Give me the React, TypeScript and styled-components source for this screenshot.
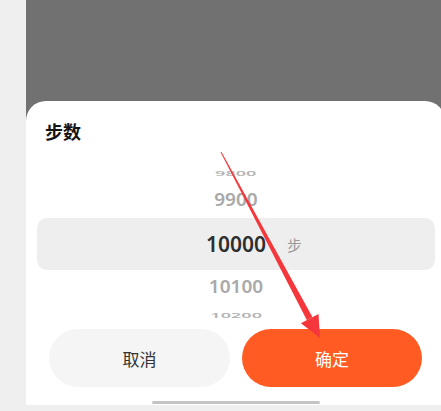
import styled, { createGlobalStyle } from "styled-components";

const GlobalStyle = createGlobalStyle`
  html, body {
    margin: 0;
    padding: 0;
    background: #efefef;
    overflow: hidden;
  }
  body {
    font-family: "Noto Sans", "Noto Sans CJK SC", sans-serif;
  }
`;

type Row = { value: number; sx: number; sy: number; h: number; color: string };

const above: Row[] = [
  { value: 9800, sx: 0.95, sy: 0.38, h: 20, color: "#b4b4b4" },
  { value: 9900, sx: 1, sy: 0.9, h: 35, color: "#a9a9a9" },
];

const below: Row[] = [
  { value: 10100, sx: 1, sy: 0.9, h: 35, color: "#a9a9a9" },
  { value: 10200, sx: 0.95, sy: 0.38, h: 20, color: "#b4b4b4" },
];

const App = () => {
  const renderRow = (r: Row) => (
    <WheelRow key={r.value} $h={r.h}>
      <WheelText $sx={r.sx} $sy={r.sy} $color={r.color}>
        {r.value}
      </WheelText>
    </WheelRow>
  );

  return (
    <>
      <GlobalStyle />
      <Page>
        <Screen>
          <Overlay />
          <Sheet>
            <Title>步数</Title>
            <Picker>
              {above.map(renderRow)}
              <Selected>
                <span />
                <SelectedValue>10000</SelectedValue>
                <Unit>步</Unit>
              </Selected>
              {below.map(renderRow)}
            </Picker>
            <Actions>
              <CancelButton>取消</CancelButton>
              <ConfirmButton>确定</ConfirmButton>
            </Actions>
            <HomeBar />
          </Sheet>
        </Screen>
        <Arrow width="441" height="411" viewBox="0 0 441 411">
          <polygon points="220.6,152.2 221.4,151.8 312.4,316.9 306.9,320.3" fill="#f5373b" />
          <polygon points="320,338 300.9,323.3 318.5,313.9" fill="#f5373b" />
        </Arrow>
      </Page>
    </>
  );
};

export default App;

const Page = styled.div`
  position: relative;
  width: 441px;
  height: 411px;
  padding-left: 26px;
  box-sizing: border-box;
  overflow: hidden;
`;

const Screen = styled.div`
  width: 419px;
  height: 405px;
  display: flex;
  flex-direction: column;
  background: #717171;
`;

const Overlay = styled.div`
  height: 101px;
  flex: none;
`;

const Sheet = styled.div`
  flex: 1;
  background: #ffffff;
  border-radius: 20px 20px 0 0;
  display: flex;
  flex-direction: column;
  padding-top: 18px;
`;

const Title = styled.div`
  height: 24px;
  line-height: 24px;
  padding-left: 19px;
  font-size: 18px;
  font-weight: 700;
  color: #141414;
  font-family: "Noto Sans CJK SC", sans-serif;
`;

const Picker = styled.div`
  margin-top: 20px;
  display: flex;
  flex-direction: column;
  padding: 0 10px 0 11px;
`;

const WheelRow = styled.div<{ $h: number }>`
  height: ${(p) => p.$h}px;
  display: flex;
  align-items: center;
  justify-content: center;
`;

const WheelText = styled.span<{ $sx: number; $sy: number; $color: string }>`
  display: inline-block;
  font-size: 19px;
  font-weight: 600;
  line-height: 1;
  color: ${(p) => p.$color};
  transform: scale(${(p) => p.$sx}, ${(p) => p.$sy});
`;

const Selected = styled.div`
  height: 52px;
  border-radius: 10px;
  background: #eeeeee;
  display: grid;
  grid-template-columns: 1fr auto 1fr;
  align-items: center;
`;

const SelectedValue = styled.span`
  font-size: 21px;
  font-weight: 600;
  color: #2e2e2e;
`;

const Unit = styled.span`
  padding-left: 21px;
  font-size: 15px;
  color: #9a9a9a;
  font-family: "Noto Sans CJK SC", sans-serif;
`;

const Actions = styled.div`
  margin-top: 4px;
  display: grid;
  grid-template-columns: 181px 180px;
  justify-content: center;
  gap: 12px;
`;

const ButtonBase = styled.button`
  height: 58px;
  border: none;
  border-radius: 29px;
  font-size: 17px;
  font-family: "Noto Sans CJK SC", sans-serif;
  padding: 0;
`;

const CancelButton = styled(ButtonBase)`
  background: #f5f5f5;
  color: #333333;
`;

const ConfirmButton = styled(ButtonBase)`
  background: #ff5b22;
  color: #ffffff;
`;

const HomeBar = styled.div`
  width: 168px;
  height: 3px;
  border-radius: 2px;
  background: #c4c4c4;
  margin: 14px auto 0;
`;

const Arrow = styled.svg`
  position: absolute;
  left: 0;
  top: 0;
  pointer-events: none;
`;
